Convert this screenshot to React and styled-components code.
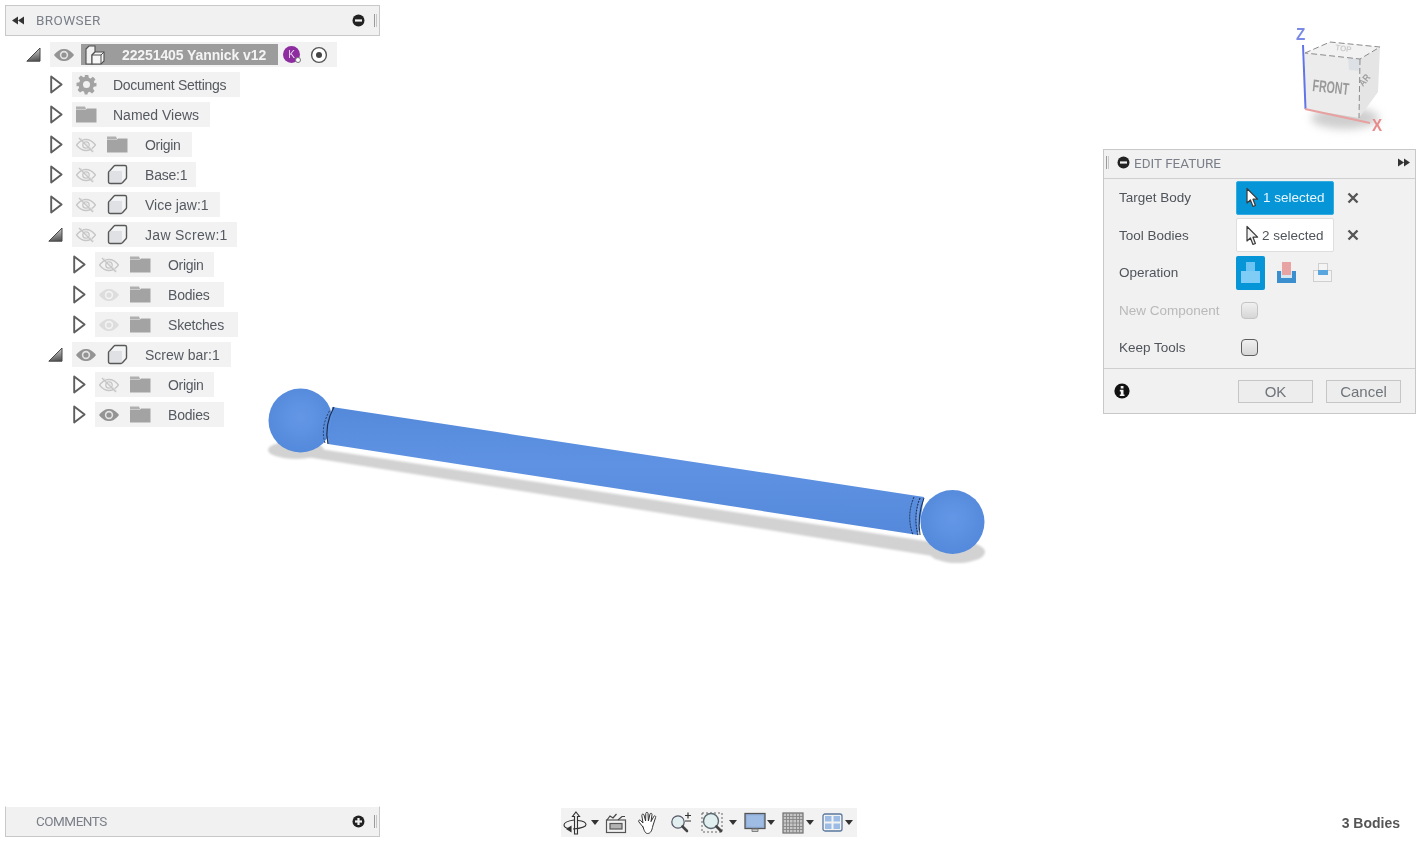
import React from "react";
import styled, { createGlobalStyle } from "styled-components";

const Global = createGlobalStyle`
  html, body { margin: 0; padding: 0; background: #fff; overflow: hidden; }
  body { font-family: "Liberation Sans", Arial, sans-serif; }
`;

const Stage = styled.div`
  position: relative;
  width: 1420px;
  height: 843px;
  background: #fff;
  overflow: hidden;
  filter: blur(0.45px);
`;

const ModelLayer = styled.svg`
  position: absolute;
  inset: 0;
  width: 1420px;
  height: 843px;
`;

const CubeLayer = styled.svg`
  position: absolute;
  left: 1285px;
  top: 20px;
  width: 110px;
  height: 125px;
`;

const Panel = styled.div`
  position: absolute;
  left: 5px;
  width: 375px;
  box-sizing: border-box;
`;

const BrowserPanel = styled(Panel)`
  top: 5px;
`;

const CommentsPanel = styled(Panel)`
  top: 806px;
`;

const PanelBar = styled.div`
  display: flex;
  align-items: center;
  box-sizing: border-box;
  height: 31px;
  padding: 0 1px 0 6px;
  background: #f1f1f1;
  border: 1px solid #c8c8c8;
  ${(p) => p.$open && "border-top-color: transparent; background-clip: padding-box;"}
`;

const PanelTitle = styled.span`
  font-family: Roboto, "Liberation Sans", sans-serif;
  font-size: 13.5px;
  color: #7a7f88;
  margin-left: ${(p) => p.$ml}px;
  letter-spacing: ${(p) => p.$ls}px;
  flex: 1;
  position: relative;
  top: -1px;
`;

const Grip = styled.span`
  width: 3px;
  height: 13px;
  margin-left: 9px;
  margin-right: 1px;
  border-left: 1px solid #9a9a9a;
  border-right: 1px solid #c8c8c8;
  box-sizing: border-box;
`;

const Tree = styled.div`
  display: flex;
  flex-direction: column;
  gap: 5px;
  margin-top: 6px;
`;

const Row = styled.div`
  display: flex;
  align-items: center;
  height: 25px;
  padding-left: ${(p) => [11, 33, 56][p.$depth]}px;
`;

const ArrowSlot = styled.span`
  width: 34px;
  height: 25px;
  box-sizing: border-box;
  padding-left: ${(p) => (p.$closed ? 2 : 0)}px;
  display: flex;
  align-items: center;
  justify-content: center;
`;

const Pill = styled.div`
  display: flex;
  align-items: center;
  height: 25px;
  background: #f2f2f2;
  padding: 0 ${(p) => p.$pr ?? 13}px 0 4px;
`;

const IconGap = styled.span`
  display: flex;
  margin-left: ${(p) => p.$ml || 0}px;
`;

const Label = styled.span`
  font-size: 14px;
  color: #555a60;
  margin-left: ${(p) => p.$ml}px;
  white-space: nowrap;
  letter-spacing: ${(p) => p.$ls || 0}px;
`;

const RootBar = styled.div`
  display: flex;
  align-items: center;
  width: 197px;
  height: 21px;
  margin-left: 7px;
  background: #9c9c9c;
  padding-left: 3px;
  box-sizing: border-box;
`;

const RootLabel = styled.span`
  font-size: 14px;
  font-weight: 700;
  color: #f4f4f4;
  margin-left: 16px;
  white-space: nowrap;
  letter-spacing: -0.1px;
`;

const Badge = styled.span`
  position: relative;
  width: 17px;
  height: 17px;
  margin-left: 5px;
  border-radius: 50%;
  background: #8e2da0;
  color: #e9d6ee;
  font-size: 10px;
  line-height: 17px;
  text-align: center;
`;

const BadgeDot = styled.span`
  position: absolute;
  right: -1px;
  bottom: 0;
  width: 6px;
  height: 6px;
  background: #fff;
  border: 1px solid #777;
  border-radius: 50%;
  box-sizing: border-box;
`;

const Dialog = styled.div`
  position: absolute;
  left: 1103px;
  top: 149px;
  width: 313px;
  height: 265px;
  box-sizing: border-box;
  background: #f1f1f1;
  border: 1px solid #c8c8c8;
  display: flex;
  flex-direction: column;
`;

const DialogHead = styled.div`
  display: flex;
  align-items: center;
  height: 29px;
  flex: none;
  padding: 0 5px 3px 2px;
  box-sizing: border-box;
  border-bottom: 1px solid #cfcfcf;
`;

const HeadGrip = styled(Grip)`
  margin: 0 8px 0 0;
`;

const HeadTitle = styled.span`
  flex: 1;
  font-family: Roboto, "Liberation Sans", sans-serif;
  font-size: 13.5px;
  color: #7a7f88;
  margin-left: 4px;
`;

const DialogBody = styled.div`
  flex: 1;
  display: grid;
  grid-template-columns: 117px 1fr;
  grid-auto-rows: 37.5px;
  align-content: start;
  align-items: center;
  padding: 0 0 0 15px;
`;

const FieldLabel = styled.span`
  font-size: 13.5px;
  color: ${(p) => (p.$off ? "#b9b9b9" : "#4f545a")};
  white-space: nowrap;
`;

const FieldControl = styled.div`
  display: flex;
  align-items: center;
`;

const SelectButton = styled.div`
  display: flex;
  align-items: center;
  width: 98px;
  height: 34px;
  box-sizing: border-box;
  padding-left: 8px;
  gap: ${(p) => (p.$active ? 4 : 3)}px;
  border-radius: 2px;
  font-size: 13.5px;
  background: ${(p) => (p.$active ? "#0696d7" : "#fff")};
  border: 1px solid ${(p) => (p.$active ? "#35ace0" : "#dedede")};
  color: ${(p) => (p.$active ? "#eaf6fc" : "#4f545a")};
`;

const ClearMark = styled.span`
  display: flex;
  margin-left: 13px;
`;

const OpButton = styled.div`
  display: flex;
  align-items: center;
  justify-content: center;
  width: ${(p) => p.$w}px;
  height: 34px;
  margin-right: ${(p) => p.$mr || 0}px;
  border-radius: 2px;
  background: ${(p) => (p.$active ? "#0696d7" : "transparent")};
`;

const CheckBox = styled.span`
  display: block;
  width: 17px;
  height: 17px;
  margin-left: 5px;
  box-sizing: border-box;
  border-radius: 4px;
  border: 1px solid ${(p) => (p.$off ? "#c4c4c4" : "#5e5e5e")};
  background: linear-gradient(#f0f0f0, #d6d6d6);
`;

const DialogFoot = styled.div`
  display: flex;
  align-items: center;
  height: 45px;
  flex: none;
  box-sizing: border-box;
  padding: 0 14px 0 10px;
  border-top: 1px solid #cfcfcf;
`;

const FootSpacer = styled.span`
  flex: 1;
`;

const FootButton = styled.div`
  width: 75px;
  height: 23px;
  margin-left: 13px;
  box-sizing: border-box;
  border: 1px solid #c6c6c6;
  background: #ededed;
  color: #70757a;
  font-size: 15px;
  line-height: 22px;
  text-align: center;
`;

const Toolbar = styled.div`
  position: absolute;
  left: 561px;
  top: 808px;
  width: 296px;
  height: 29px;
  background: #f2f2f2;
  display: flex;
  align-items: center;
`;

const Tool = styled.span`
  display: flex;
  margin-left: ${(p) => p.$ml}px;
`;

const Status = styled.div`
  position: absolute;
  right: 20px;
  top: 815px;
  font-size: 14px;
  font-weight: 700;
  color: #555;
`;

/* ---------- icons ---------- */

const Eye = ({ kind }) => {
  const color = kind === "on" ? "#949494" : kind === "off" ? "#c6c6c6" : "#dddddd";
  const ring = kind === "on" ? "#e4e4e4" : "#f3f3f3";
  return (
    <svg width="20" height="16" viewBox="0 0 20 16">
      {kind === "off" ? (
        <>
          <path d="M0.5 8 C4 3.5 7 2.5 10 2.5 C13 2.5 16 3.5 19.5 8 C16 12.5 13 13.5 10 13.5 C7 13.5 4 12.5 0.5 8Z" fill="none" stroke={color} strokeWidth="1.3" />
          <circle cx="10" cy="8" r="3.2" fill="none" stroke={color} strokeWidth="1.3" />
          <path d="M3 1 L17 15" stroke={color} strokeWidth="1.4" />
          <path d="M5 1 L18 14" stroke="#e0e0e0" strokeWidth="0.8" />
        </>
      ) : (
        <>
          <path d="M0 8 C4 3 7 2 10 2 C13 2 16 3 20 8 C16 13 13 14 10 14 C7 14 4 13 0 8Z" fill={color} />
          <circle cx="10" cy="8" r="4.2" fill={ring} />
          <circle cx="10" cy="8" r="2.6" fill={color} />
        </>
      )}
    </svg>
  );
};

const Folder = () => (
  <svg width="21" height="17" viewBox="0 0 21 17">
    <path d="M0 0.5 H9 L10 3 H0Z" fill="#b0b0b0" />
    <path d="M0 3.5 H10 L11 2.5 H20.5 V16.5 H0Z" fill="#a3a3a3" />
  </svg>
);

const Gear = () => (
  <svg width="21" height="21" viewBox="0 0 24 24">
    <path
      fill="#a3a3a3"
      fillRule="evenodd"
      d="M10 1h4l.7 3.2 1.9.8 2.8-1.8 2.8 2.8-1.8 2.8.8 1.9L23.4 10v4l-3.2.7-.8 1.9 1.8 2.8-2.8 2.8-2.8-1.8-1.9.8L13 23.4h-3l-.7-3.2-1.9-.8-2.8 1.8-2.8-2.8 1.8-2.8-.8-1.9L.6 14v-4l3.2-.7.8-1.9L2.8 4.6l2.8-2.8 2.8 1.8 1.9-.8zM12 8a4 4 0 1 0 0 8 4 4 0 0 0 0-8z"
    />
  </svg>
);

const Block = () => (
  <svg width="21" height="21" viewBox="0 0 21 21">
    <path d="M1.5 7 L6.5 1.5 H19.5 V14.5 L15 19.5 H1.5Z" fill="#f3f4f5" />
    <path d="M2 7 H15 V19 H2Z" fill="#dfe1e4" />
    <path d="M3 6.5 L7 2 Q7.4 1.5 8 1.5 H18 Q19.5 1.5 19.5 3 V13.5 Q19.5 14.2 19 14.7 L15.4 18.7 Q14.8 19.5 14 19.5 H3.5 Q1.5 19.5 1.5 17.5 V8.5 Q1.5 7.5 3 6.5Z" fill="none" stroke="#585858" strokeWidth="1.4" />
  </svg>
);

const OpenArrow = () => (
  <svg width="15" height="15" viewBox="0 0 15 15">
    <defs>
      <linearGradient id="openArrow" x1="0.4" y1="0" x2="0.6" y2="1">
        <stop offset="0" stopColor="#d8d8d8" />
        <stop offset="1" stopColor="#525252" />
      </linearGradient>
    </defs>
    <path d="M0.8 14.2 L14 1 V14.2Z" fill="url(#openArrow)" stroke="#484848" strokeWidth="1" strokeLinejoin="round" />
  </svg>
);

const ClosedArrow = () => (
  <svg width="13" height="19" viewBox="0 0 13 19">
    <path d="M1.2 1.5 L11.6 9.5 L1.2 17.5Z" fill="#fff" stroke="#5e5e5e" strokeWidth="1.9" strokeLinejoin="round" />
  </svg>
);

const Component = () => (
  <svg width="22" height="21" viewBox="0 0 22 21">
    <path d="M2 5 L5 2 H11 V8 L8 11 V20 H2Z" fill="#f1f1f1" stroke="#4f4f4f" strokeWidth="1.1" />
    <path d="M8 11 L11 8 H20 V17 L17 20 H8Z" fill="#f7f7f7" stroke="#4f4f4f" strokeWidth="1.1" />
    <path d="M8 11 H17 V20 M17 11 L20 8" fill="none" stroke="#4f4f4f" strokeWidth="1" />
  </svg>
);

const Target = () => (
  <svg width="18" height="18" viewBox="0 0 18 18">
    <circle cx="9" cy="9" r="7.4" fill="#fff" stroke="#555" strokeWidth="1.4" />
    <circle cx="9" cy="9" r="3" fill="#444" />
  </svg>
);

const Rewind = ({ flip }) => (
  <svg width="12" height="9" viewBox="0 0 12 9" style={flip ? { transform: "scaleX(-1)" } : undefined}>
    <path d="M0 4.5 L6 0.5 V8.5Z M6 4.5 L12 0.5 V8.5Z" fill="#333" />
  </svg>
);

const RoundMark = ({ plus }) => (
  <svg width="13" height="13" viewBox="0 0 13 13">
    <circle cx="6.5" cy="6.5" r="6" fill="#222" />
    <rect x="3" y="5.4" width="7" height="2.2" fill="#f2f2f2" />
    {plus && <rect x="5.4" y="3" width="2.2" height="7" fill="#f2f2f2" />}
  </svg>
);

const Pointer = ({ active }) => (
  <svg width="14" height="21" viewBox="0 0 14 21">
    <path d="M2 1.5 V16 L5.4 13 L8 19.5 L10.4 18.5 L8 12.2 H12.6Z" fill={active ? "#fff" : "#f2f2f2"} stroke="#3a3a3a" strokeWidth="1.2" strokeLinejoin="round" />
  </svg>
);

const Cross = () => (
  <svg width="12" height="12" viewBox="0 0 12 12">
    <path d="M1.5 1.5 L10.5 10.5 M10.5 1.5 L1.5 10.5" stroke="#555" strokeWidth="2.4" />
  </svg>
);

const Info = () => (
  <svg width="16" height="16" viewBox="0 0 16 16">
    <circle cx="8" cy="8" r="7.6" fill="#111" />
    <rect x="6.7" y="3" width="2.8" height="2.5" fill="#f2f2f2" />
    <path d="M5.8 6.8 H9.5 V11.4 H10.5 V13 H5.8 V11.4 H6.8 V8.4 H5.8Z" fill="#f2f2f2" />
  </svg>
);

const OpJoin = () => (
  <svg width="21" height="23" viewBox="0 0 21 23">
    <rect x="6" y="1" width="9" height="9" fill="#6cc4f2" />
    <rect x="1" y="10" width="19" height="12" fill="#7fcdf6" />
  </svg>
);

const OpCut = () => (
  <svg width="21" height="23" viewBox="0 0 21 23">
    <path d="M1 10 H5 V17 H16 V10 H20 V22 H1Z" fill="#3b8fcf" />
    <path d="M5 10 H16 V17 H5Z" fill="#d7e7f2" />
    <rect x="6" y="1" width="9" height="13" fill="#e8a3a3" />
  </svg>
);

const OpIntersect = () => (
  <svg width="21" height="23" viewBox="0 0 21 23">
    <rect x="6.5" y="2.5" width="9" height="11" fill="#f4f4f4" stroke="#cfcfcf" />
    <rect x="1.5" y="9.5" width="18" height="11" fill="#f4f4f4" stroke="#cfcfcf" />
    <rect x="6" y="9" width="10" height="5" fill="#5aa7e0" />
  </svg>
);

const Caret = () => (
  <svg width="8" height="5" viewBox="0 0 8 5">
    <path d="M0 0 H8 L4 5Z" fill="#333" />
  </svg>
);

const Orbit = () => (
  <svg width="24" height="24" viewBox="0 0 24 24" fill="none" stroke="#333" strokeWidth="1.1">
    <path d="M13 1 L16.5 5.5 H14.5 V23 H11.5 V5.5 H9.5Z" fill="#eee" />
    <path d="M11 9 C4 10 1 12 1 14 C1 16 4 17.5 8 18" />
    <path d="M15 9.5 C20 10 23 11.5 23 13.5 C23 15.5 18 17.5 10 18" />
    <path d="M8 15.5 L4 18 L8 20.5Z" fill="#333" />
  </svg>
);

const LookAt = () => (
  <svg width="22" height="22" viewBox="0 0 22 22" fill="none" stroke="#555" strokeWidth="1.2">
    <rect x="1.5" y="8" width="19" height="12.5" fill="#f2f2f2" />
    <rect x="5" y="11.5" width="12" height="5.5" fill="#b3b3b3" />
    <path d="M2 8 L5 4 L8 6 L11.5 2 M13 8 L17 4.5 H20" stroke="#444" />
  </svg>
);

const Hand = () => (
  <svg width="22" height="24" viewBox="0 0 22 24" fill="none" stroke="#333" strokeWidth="1" strokeLinecap="round" strokeLinejoin="round">
    <path d="M6 16 L1.8 10.8 C1 9.6 2.4 8.4 3.5 9.4 L6 12 L4.8 4.5 C4.6 3 6.6 2.6 7 4 L8.6 10 L8.8 2.4 C8.9 1 10.9 1 11 2.4 L11.4 10 L13 3 C13.4 1.8 15.2 2.2 15 3.6 L14 10.6 L16.8 5.4 C17.4 4.2 19.2 5 18.6 6.4 L15.8 15 C15 19 14 22.5 10.5 22.5 C8 22.5 7 19 6 16Z" fill="#fff" />
  </svg>
);

const ZoomIcon = () => (
  <svg width="22" height="22" viewBox="0 0 22 22" fill="none">
    <circle cx="8" cy="10" r="6.2" fill="#e2eff0" stroke="#556" strokeWidth="1.2" />
    <path d="M12.5 14.5 L17 19" stroke="#444" strokeWidth="2.6" strokeLinecap="round" />
    <path d="M15 3.5 H21 M18 0.5 V6.5 M15 9 H21" stroke="#333" strokeWidth="1.2" />
  </svg>
);

const Fit = () => (
  <svg width="24" height="24" viewBox="0 0 24 24" fill="none">
    <rect x="1" y="2" width="20" height="19" stroke="#666" strokeWidth="1" strokeDasharray="2 2" />
    <circle cx="10" cy="10" r="7.5" fill="#e2eff0" stroke="#5a6a70" strokeWidth="1.4" />
    <path d="M15.5 15.5 L20 20" stroke="#444" strokeWidth="2.8" strokeLinecap="round" />
  </svg>
);

const Display = () => (
  <svg width="22" height="22" viewBox="0 0 22 22">
    <rect x="1" y="1.5" width="20" height="15" fill="#93b1db" stroke="#555" strokeWidth="1.3" />
    <rect x="3" y="3.5" width="16" height="11" fill="#9fbce4" />
    <path d="M8 17 H14 V19.5 H8Z" fill="#ccc" stroke="#777" strokeWidth="0.9" />
  </svg>
);

const GridIcon = () => (
  <svg width="22" height="22" viewBox="0 0 22 22">
    <rect x="1" y="1" width="20" height="20" fill="#c6c6c6" stroke="#6e6e6e" strokeWidth="1.2" />
    <path d="M4.5 1V21M7.5 1V21M11 1V21M14.5 1V21M17.5 1V21M1 4.5H21M1 7.5H21M1 11H21M1 14.5H21M1 17.5H21" stroke="#868686" strokeWidth="0.9" />
  </svg>
);

const Viewports = () => (
  <svg width="21" height="19" viewBox="0 0 21 19">
    <rect x="1" y="1" width="19" height="17" rx="2" fill="#f2f2f2" stroke="#5a789f" strokeWidth="1.3" />
    <path d="M3 3 H9.5 V8.5 H3Z M11.5 3 H18 V8.5 H11.5Z M3 10.5 H9.5 V16 H3Z M11.5 10.5 H18 V16 H11.5Z" fill="#9cbce6" />
  </svg>
);

/* ---------- data ---------- */

const rows = [
  { depth: 1, icon: "gear", label: "Document Settings", ls: -0.3, pr: 14 },
  { depth: 1, icon: "folder", label: "Named Views", pr: 11 },
  { depth: 1, eye: "off", icon: "folder", label: "Origin", ls: -0.3, pr: 11 },
  { depth: 1, eye: "off", icon: "block", label: "Base:1", ls: -0.2, pr: 9 },
  { depth: 1, eye: "off", icon: "block", label: "Vice jaw:1", pr: 11 },
  { depth: 1, open: true, eye: "off", icon: "block", label: "Jaw Screw:1", ls: 0.3, pr: 9 },
  { depth: 2, eye: "off", icon: "folder", label: "Origin", ls: -0.3, pr: 10 },
  { depth: 2, eye: "faint", icon: "folder", label: "Bodies", ls: -0.2, pr: 14 },
  { depth: 2, eye: "faint", icon: "folder", label: "Sketches", ls: -0.2, pr: 14 },
  { depth: 1, open: true, eye: "on", icon: "block", label: "Screw bar:1", pr: 11 },
  { depth: 2, eye: "off", icon: "folder", label: "Origin", ls: -0.3, pr: 10 },
  { depth: 2, eye: "on", icon: "folder", label: "Bodies", ls: -0.2, pr: 14 },
];

const iconFor = { gear: Gear, folder: Folder, block: Block };

const TreeRow = ({ row }) => {
  const Icon = iconFor[row.icon];
  return (
    <Row $depth={row.depth}>
      <ArrowSlot $closed={!row.open}>{row.open ? <OpenArrow /> : <ClosedArrow />}</ArrowSlot>
      <Pill $pr={row.pr}>
        {row.eye && <Eye kind={row.eye} />}
        <IconGap $ml={row.eye ? 11 : 0}>
          <Icon />
        </IconGap>
        <Label $ls={row.ls} $ml={row.eye ? 17 : 16}>{row.label}</Label>
      </Pill>
    </Row>
  );
};

const Model = () => (
  <ModelLayer viewBox="0 0 1420 843">
    <defs>
      <radialGradient id="ball" cx="0.5" cy="0.45" r="0.6">
        <stop offset="0" stopColor="#6497e6" />
        <stop offset="1" stopColor="#5288da" />
      </radialGradient>
      <linearGradient id="shaft" x1="0.5" y1="0" x2="0.46" y2="1">
        <stop offset="0" stopColor="#5489da" />
        <stop offset="0.45" stopColor="#5f92e2" />
        <stop offset="1" stopColor="#5488da" />
      </linearGradient>
      <filter id="soft" x="-10%" y="-50%" width="120%" height="200%">
        <feGaussianBlur stdDeviation="1.2" />
      </filter>
    </defs>
    <g filter="url(#soft)" fill="#d2d2d2">
      <ellipse cx="296" cy="450" rx="28" ry="9" />
      <path d="M300 446 L945 544 L945 558 L300 456Z" />
      <ellipse cx="957" cy="552" rx="28" ry="11" />
    </g>
    <path d="M332 407 L924 497 L918 535 L328 444Z" fill="url(#shaft)" />
    <circle cx="300.5" cy="420.5" r="32" fill="url(#ball)" />
    <circle cx="952.5" cy="522" r="32" fill="url(#ball)" />
    <path d="M328 444 Q324 425 334 407" fill="#5a8fe0" stroke="#1d2f4f" strokeWidth="1.2" />
    <path d="M325 443 Q320 427 330 410" fill="none" stroke="#2a3c5c" strokeWidth="1" strokeDasharray="2 1.5" />
    <path d="M914 497 Q906 516 913 535" fill="#5a8fe0" stroke="#1d2f4f" strokeWidth="1" strokeDasharray="2 1" />
    <path d="M920 498 Q913 516 918 535" fill="#6e9ee6" stroke="#1d2f4f" strokeWidth="1.1" strokeDasharray="2 1" />
    <path d="M924 498 Q917 516 920 535" fill="none" stroke="#1d2f4f" strokeWidth="1" />
  </ModelLayer>
);

const ViewCube = () => (
  <CubeLayer viewBox="1285 20 110 125">
    <defs>
      <filter id="cubeShadow" x="-30%" y="-60%" width="160%" height="220%">
        <feGaussianBlur stdDeviation="4.5" />
      </filter>
      <filter id="cubeSoft" x="-10%" y="-10%" width="120%" height="120%">
        <feGaussianBlur stdDeviation="0.6" />
      </filter>
    </defs>
    <ellipse cx="1345" cy="118" rx="34" ry="11" fill="#cfcfcf" filter="url(#cubeShadow)" />
    <g filter="url(#cubeSoft)">
      <path d="M1305 53 L1330 42 L1380 47 L1360 59Z" fill="#f2f2f2" />
      <path d="M1305 53 L1360 59 L1359 118 L1305 109Z" fill="#ececec" />
      <path d="M1360 59 L1380 47 L1378 92 L1359 118Z" fill="#e5e5e5" />
      <path d="M1348 58 L1360 59 L1360 71 L1349 70Z" fill="#dde1e6" />
      <path d="M1305 53 L1330 42 L1380 47 L1360 59 L1305 53 M1360 59 L1359 118" fill="none" stroke="#8a8a8a" strokeWidth="1" strokeDasharray="6 3" />
      <text fontSize="14" fontWeight="700" fill="#999" fontFamily="Liberation Sans, sans-serif" transform="translate(1312 91) rotate(6) scale(0.76 1.2)">FRONT</text>
      <text fontSize="10" fontWeight="700" fill="#a0a0a0" fontFamily="Liberation Sans, sans-serif" transform="translate(1363 87) rotate(-50) scale(0.85 1)">AR</text>
      <text fontSize="8" fontWeight="700" fill="#cccccc" fontFamily="Liberation Sans, sans-serif" transform="translate(1335 50) rotate(8)">TOP</text>
    </g>
    <path d="M1303 45 L1305.5 109" stroke="#6374e6" strokeWidth="2" />
    <path d="M1305 109 L1370 123" stroke="#e8a0a0" strokeWidth="2" />
    <text fontSize="16" fontWeight="700" fill="#7b8ae6" fontFamily="Liberation Sans, sans-serif" transform="translate(1296 40) scale(0.95 1.05)">Z</text>
    <text fontSize="16" fontWeight="700" fill="#e88a8a" fontFamily="Liberation Sans, sans-serif" transform="translate(1372 131) scale(0.95 1.05)">X</text>
  </CubeLayer>
);

export default function App() {
  return (
    <>
      <Global />
      <Stage>
        <Model />
        <ViewCube />

        <BrowserPanel>
          <PanelBar>
            <Rewind />
            <PanelTitle $ml={12} $ls={0.4}>BROWSER</PanelTitle>
            <RoundMark />
            <Grip />
          </PanelBar>
          <Tree>
            <Row $depth={0}>
              <ArrowSlot>
                <OpenArrow />
              </ArrowSlot>
              <Pill $pr={9}>
                <Eye kind="on" />
                <RootBar>
                  <Component />
                  <RootLabel>22251405 Yannick v12</RootLabel>
                </RootBar>
                <Badge>
                  K
                  <BadgeDot />
                </Badge>
                <IconGap $ml={10}>
                  <Target />
                </IconGap>
              </Pill>
            </Row>
            {rows.map((row, i) => (
              <TreeRow key={i} row={row} />
            ))}
          </Tree>
        </BrowserPanel>

        <Dialog>
          <DialogHead>
            <HeadGrip />
            <RoundMark />
            <HeadTitle>EDIT FEATURE</HeadTitle>
            <Rewind flip />
          </DialogHead>
          <DialogBody>
            <FieldLabel>Target Body</FieldLabel>
            <FieldControl>
              <SelectButton $active>
                <Pointer active />
                1 selected
              </SelectButton>
              <ClearMark>
                <Cross />
              </ClearMark>
            </FieldControl>
            <FieldLabel>Tool Bodies</FieldLabel>
            <FieldControl>
              <SelectButton>
                <Pointer />
                2 selected
              </SelectButton>
              <ClearMark>
                <Cross />
              </ClearMark>
            </FieldControl>
            <FieldLabel>Operation</FieldLabel>
            <FieldControl>
              <OpButton $active $w={29} $mr={7}>
                <OpJoin />
              </OpButton>
              <OpButton $w={29} $mr={7}>
                <OpCut />
              </OpButton>
              <OpButton $w={29}>
                <OpIntersect />
              </OpButton>
            </FieldControl>
            <FieldLabel $off>New Component</FieldLabel>
            <FieldControl>
              <CheckBox $off />
            </FieldControl>
            <FieldLabel>Keep Tools</FieldLabel>
            <FieldControl>
              <CheckBox />
            </FieldControl>
          </DialogBody>
          <DialogFoot>
            <Info />
            <FootSpacer />
            <FootButton>OK</FootButton>
            <FootButton>Cancel</FootButton>
          </DialogFoot>
        </Dialog>

        <CommentsPanel>
          <PanelBar $open>
            <PanelTitle $ml={24} $ls={-0.5}>COMMENTS</PanelTitle>
            <RoundMark plus />
            <Grip />
          </PanelBar>
        </CommentsPanel>

        <Toolbar>
          <Tool $ml={2}><Orbit /></Tool>
          <Tool $ml={4}><Caret /></Tool>
          <Tool $ml={6}><LookAt /></Tool>
          <Tool $ml={10}><Hand /></Tool>
          <Tool $ml={11}><ZoomIcon /></Tool>
          <Tool $ml={9}><Fit /></Tool>
          <Tool $ml={4}><Caret /></Tool>
          <Tool $ml={7}><Display /></Tool>
          <Tool $ml={1}><Caret /></Tool>
          <Tool $ml={7}><GridIcon /></Tool>
          <Tool $ml={2}><Caret /></Tool>
          <Tool $ml={8}><Viewports /></Tool>
          <Tool $ml={2}><Caret /></Tool>
        </Toolbar>

        <Status>3 Bodies</Status>
      </Stage>
    </>
  );
}
